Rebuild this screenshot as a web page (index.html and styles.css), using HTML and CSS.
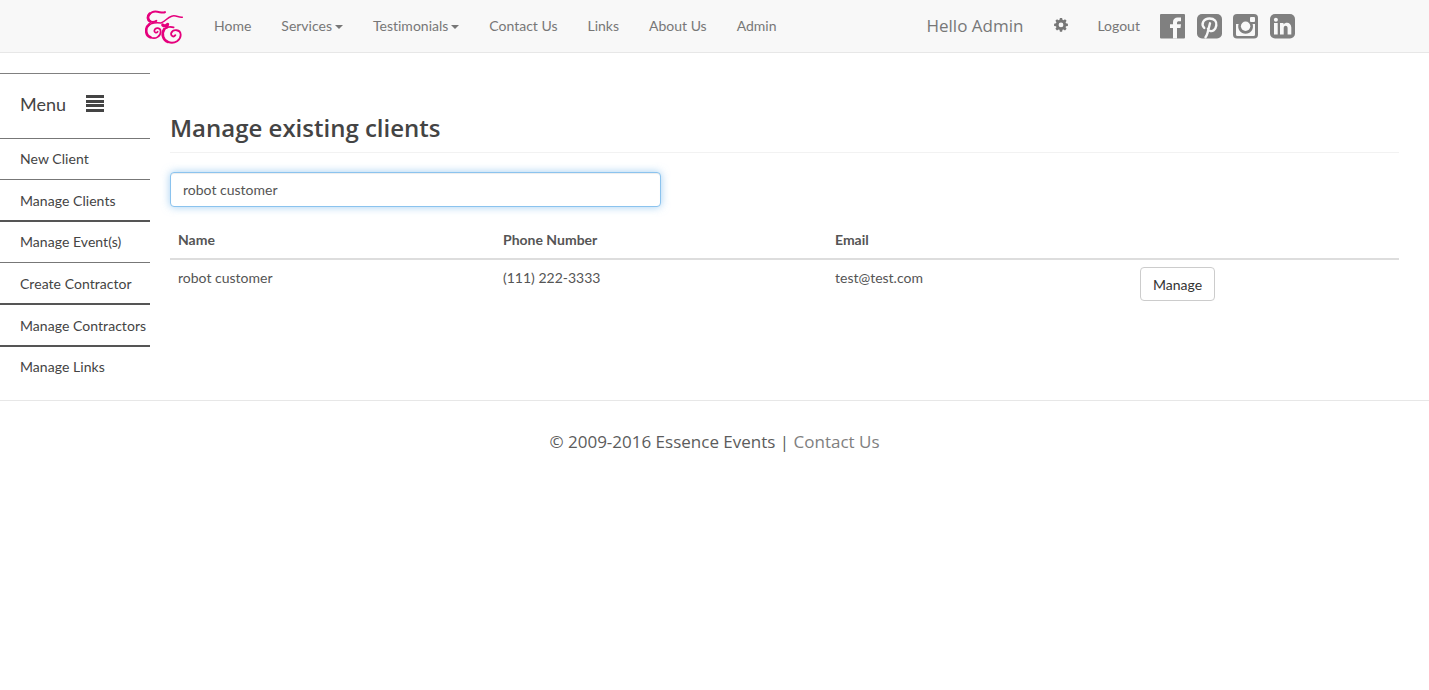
FILE: index.html
```html
<!DOCTYPE html>
<html lang="en">
<head>
<meta charset="utf-8">
<title>Essence Events - Manage Clients</title>
<link rel="stylesheet" href="styles.css">
</head>
<body>
<header class="navbar">
  <div class="navbar-inner">
    <a class="brand" aria-label="Essence Events">
      <svg width="40" height="36" viewBox="30 23 120 106" preserveAspectRatio="none" fill="none" stroke="#e5007d" stroke-linecap="round" stroke-linejoin="round">
        <path stroke-width="6" d="M90 35C82 41 66 29 52 35C40 40 35 52 43 60C48 66 58 65 64 61"/>
        <path stroke-width="8" d="M44 40C36 47 37 58 46 63"/>
        <path stroke-width="4.500" d="M142 50C130 52 124 43 110 47C96 51 90 64 78 67C62 65 44 67 35 80"/>
        <path stroke-width="8" d="M43 71C29 82 31 103 46 109"/>
        <path stroke-width="5" d="M46 109C62 117 77 106 77 92C77 80 61 79 58 89C57 95 64 98 68 93"/>
        <path stroke-width="9" d="M83 73C90 79 94 73 98 71L95 80"/>
        <path stroke-width="5" d="M116 80C100 76 87 82 83 95"/>
        <path stroke-width="8" d="M88 85C79 98 83 118 99 123"/>
        <path stroke-width="5.500" d="M99 123C120 131 138 116 137 101C136 86 115 84 109 96C106 104 115 111 121 103"/>
      </svg>
    </a>
    <nav class="links">
      <a>Home</a>
      <a>Services<i class="caret"></i></a>
      <a>Testimonials<i class="caret"></i></a>
      <a>Contact Us</a>
      <a>Links</a>
      <a>About Us</a>
      <a>Admin</a>
    </nav>
    <div class="account">
      <span class="hello">Hello Admin</span>
      <svg class="cog" width="14" height="14" viewBox="0 0 14 14"><path fill="#777" fill-rule="evenodd" d="M5.900 0h2.200l.4 1.800 1 .4L11 1.200l1.600 1.600-1 1.500.4 1 1.900.4v2.200l-1.900.4-.4 1 1 1.500-1.600 1.600-1.500-1-1 .4-.4 1.900H5.900l-.4-1.900-1-.4-1.500 1-1.600-1.600 1-1.500-.4-1-1.900-.4V5.700l1.900-.4.4-1-1-1.500L3 1.200l1.500 1 1-.4zM7 4.500a2.400 2.400 0 1 0 0 4.800 2.400 2.400 0 0 0 0-4.800z"/></svg>
      <a>Logout</a>
    </div>
    <div class="social">
      <svg width="25" height="25" viewBox="0 0 25 25"><rect width="25" height="24.500" rx="1" fill="#808080"/><path fill="#f8f8f8" d="M13 24.500V14h-3v-3.700h3V8c0-3 2-4.500 4.700-4.500H21v3.700h-2c-1.500 0-2 .6-2 1.700v1.400h4l-.5 3.700H17v10.500z"/></svg>
      <svg width="25" height="25" viewBox="0 0 25 25"><rect width="25" height="24.500" rx="5" fill="#808080"/><path fill="none" stroke="#f8f8f8" stroke-width="2.400" stroke-linecap="round" d="M7.300 14C3.500 10 6.500 4.500 12.500 4.500c5 0 7.500 3 6.800 7-.7 4.300-4 6.500-6.500 5.200-1-.5-1.600-1.200-1.800-2M13 9.300 10.500 19c-.4 1.500-1 2.800-2 4.200"/></svg>
      <svg width="25" height="25" viewBox="0 0 25 25"><rect width="25" height="24.500" rx="4" fill="#808080"/><path fill="#f8f8f8" d="M3 10h2.600a7.400 7.400 0 1 0 14 0H22v10.500q0 1.500-1.500 1.500h-16Q3 22 3 20.500z"/><circle cx="12.600" cy="12.300" r="4.700" fill="#f8f8f8"/><rect x="17" y="3" width="5" height="5" rx="1" fill="#f8f8f8"/></svg>
      <svg width="25" height="25" viewBox="0 0 25 25"><rect width="25" height="24.500" rx="5" fill="#808080"/><path fill="#f8f8f8" d="M4 9h3.700v11.500H4zM10 9h3.500v1.600c2-3 7.800-2.500 7.800 3v6.900h-3.700V14c0-3-3.900-3-3.900 0v6.500H10z"/><circle cx="5.900" cy="5.700" r="2" fill="#f8f8f8"/></svg>
    </div>
  </div>
</header>
<div class="layout">
  <aside class="sidebar">
    <div class="menu-title"><span>Menu</span>
      <svg width="19" height="18" viewBox="0 0 19 18"><path fill="#444" d="M0 0h18v3H0zM0 5h18v3H0zM0 9h18v3H0zM0 14h18v3H0z"/></svg>
    </div>
    <a class="item">New Client</a>
    <a class="item low">Manage Clients</a>
    <a class="item heavy">Manage Event(s)</a>
    <a class="item low">Create Contractor</a>
    <a class="item heavy low">Manage Contractors</a>
    <a class="item heavy">Manage Links</a>
  </aside>
  <main class="content">
    <h1>Manage existing clients</h1>
    <input class="search" type="text" value="robot customer" aria-label="Search clients">
    <table class="clients">
      <thead><tr><th class="name">Name</th><th class="phone">Phone Number</th><th class="email">Email</th><th></th></tr></thead>
      <tbody><tr><td>robot customer</td><td>(111) 222-3333</td><td>test@test.com</td><td class="action"><button class="btn">Manage</button></td></tr></tbody>
    </table>
  </main>
</div>
<footer class="footer">© 2009-2016 Essence Events | <a>Contact Us</a></footer>
</body>
</html>
```
FILE: styles.css
```css
* { box-sizing: border-box; }
body {
  margin: 0;
  background: #fff;
  color: #555;
  font: 14px/20px Lato, sans-serif;
  font-variant-ligatures: none;
}
svg { display: block; flex: none; }
.navbar {
  height: 53px;
  background: #f8f8f8;
  border-bottom: 1px solid #e7e7e7;
  color: #777;
}
.navbar-inner {
  display: flex;
  align-items: center;
  height: 52px;
  width: 1152px;
  margin-left: 145px;
}
.links { display: flex; gap: 30px; margin-left: 29px; }
.caret {
  display: inline-block;
  margin-left: 3px;
  vertical-align: middle;
  border: 4px solid transparent;
  border-top-color: #777;
  border-bottom: 0;
}
.account { display: flex; align-items: center; margin-left: auto; }
.hello { font: 17px/24px "Open Sans", sans-serif; }
.cog { margin: 0 29px 2px 31px; }
.social { display: flex; gap: 11.700px; margin: 0 2px 0 20px; }
.layout { display: flex; height: 347px; }
.sidebar { width: 150px; padding-top: 20px; color: #444; }
.menu-title {
  display: flex;
  align-items: center;
  gap: 20px;
  height: 65px;
  padding: 0 0 5px 20px;
  border-top: 1px solid #808080;
  font-size: 18px;
}
.item {
  display: block;
  height: 41px;
  padding: 10px 0 0 20px;
  border-top: 1px solid #777;
  letter-spacing: .05px;
  white-space: nowrap;
}
.item.low { padding-top: 11px; }
.item.heavy { height: 42px; border-top: 2px solid #555; }
.content { flex: 1; padding: 53px 30px 0 20px; }
h1 {
  margin: 0 0 19px;
  height: 47px;
  padding-top: 6px;
  border-bottom: 1px solid #f2f2f2;
  color: #444;
  font: 600 24px/32px "Open Sans", sans-serif;
}
.search {
  display: block;
  width: 491px;
  height: 35px;
  padding: 6px 12px;
  border: 1px solid #8bc3ee;
  border-radius: 4px;
  outline: 0;
  color: #555;
  font: inherit;
  box-shadow: inset 0 1px 1px rgba(0,0,0,.075), 0 0 8px rgba(102,175,233,.6);
}
.clients {
  width: 1229px;
  margin-top: 15px;
  border-collapse: separate;
  border-spacing: 0;
  table-layout: fixed;
}
.clients th, .clients td { padding: 8px; text-align: left; vertical-align: top; }
.clients th { height: 38px; border-bottom: 2px solid #ddd; }
.clients .action { padding-top: 7px; }
.name { width: 325px; }
.phone { width: 332px; }
.email { width: 305px; }
.btn {
  display: block;
  width: 75px;
  height: 34px;
  padding: 1px 0 0;
  border: 1px solid #ccc;
  border-radius: 4px;
  background: #fff;
  color: #333;
  font: inherit;
}
.footer {
  padding-top: 29px;
  border-top: 1px solid #e7e7e7;
  text-align: center;
  color: #5c5c5c;
  font: 17px/24px "Open Sans", sans-serif;
}
.footer a { color: #808080; }
```
